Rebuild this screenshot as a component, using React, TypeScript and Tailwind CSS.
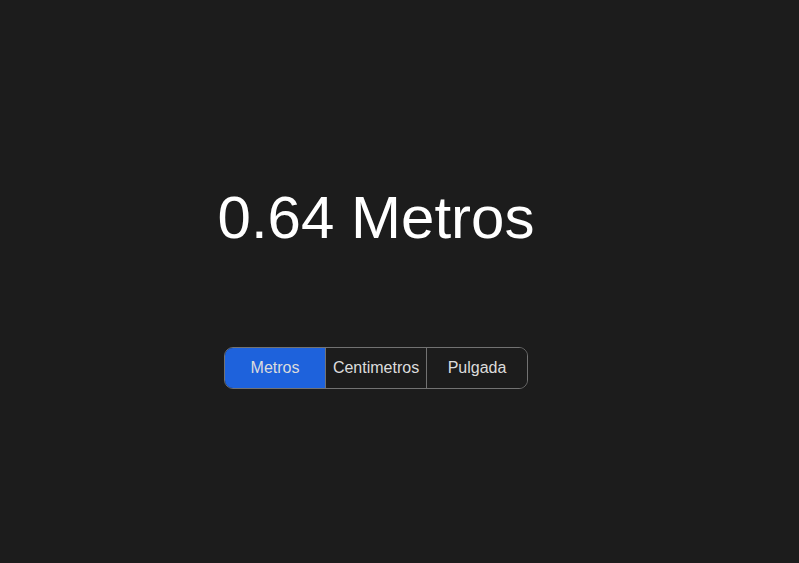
import { useState } from "react";

const units = ["Metros", "Centimetros", "Pulgada"];

const App = () => {
  const [unit, setUnit] = useState("Metros");

  return (
    <div
      className="min-h-screen w-full bg-[#1c1c1c] text-white"
      style={{ fontFamily: '"Liberation Sans", Arial, sans-serif' }}
    >
      <div className="w-[752px] flex flex-col items-center pt-[188px]">
        {/* Value */}
        <h1 className="text-[60px] leading-[60px] font-normal text-white">
          0.64 {unit}
        </h1>

        {/* Unit switcher */}
        <div className="mt-[99px] flex border border-[#727272] rounded-[9px] overflow-hidden">
          {units.map((u, i) => (
            <button
              key={u}
              onClick={() => setUnit(u)}
              className={
                "h-[40px] text-base text-[#dcdcdc] " +
                (i > 0 ? "w-[101px] border-l border-[#727272] " : "w-[100px] ") +
                (unit === u ? "bg-[#1e62dc]" : "bg-[#1c1c1c]")
              }
            >
              {u}
            </button>
          ))}
        </div>
      </div>
    </div>
  );
};

export default App;
